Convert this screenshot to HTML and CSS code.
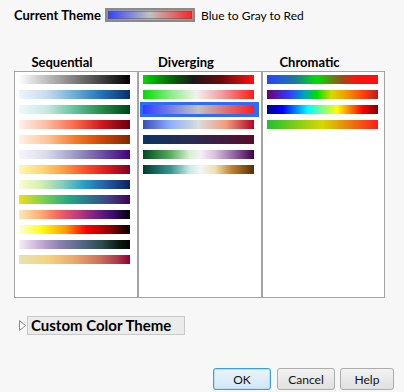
FILE: index.html
```html
<!DOCTYPE html>
<html lang="en">

<head>
    <meta charset="UTF-8">
    <meta name="viewport" content="width=device-width, initial-scale=1.0">
    <title>Color Themes</title>
    <link rel="stylesheet" href="styles.css">
</head>

<body>
    <div class="dialog">
        <div class="theme-row">
            <span class="theme-label">Current Theme</span>
            <span class="theme-swatch"></span>
            <span class="theme-name">Blue to Gray to Red</span>
        </div>

        <div class="lists">
            <div class="list-col">
                <p class="list-title">Sequential</p>
                <div class="list-box">
                    <div class="bar seq-1"></div>
                    <div class="bar seq-2"></div>
                    <div class="bar seq-3"></div>
                    <div class="bar seq-4"></div>
                    <div class="bar seq-5"></div>
                    <div class="bar seq-6"></div>
                    <div class="bar seq-7"></div>
                    <div class="bar seq-8"></div>
                    <div class="bar seq-9"></div>
                    <div class="bar seq-10"></div>
                    <div class="bar seq-11"></div>
                    <div class="bar seq-12"></div>
                    <div class="bar seq-13"></div>
                </div>
            </div>
            <div class="list-col">
                <p class="list-title">Diverging</p>
                <div class="list-box">
                    <div class="bar div-1"></div>
                    <div class="bar div-2"></div>
                    <div class="is-selected">
                        <div class="bar div-3"></div>
                    </div>
                    <div class="bar div-4"></div>
                    <div class="bar div-5"></div>
                    <div class="bar div-6"></div>
                    <div class="bar div-7"></div>
                </div>
            </div>
            <div class="list-col last">
                <p class="list-title">Chromatic</p>
                <div class="list-box">
                    <div class="bar chr-1"></div>
                    <div class="bar chr-2"></div>
                    <div class="bar chr-3"></div>
                    <div class="bar chr-4"></div>
                </div>
            </div>
        </div>

        <div class="custom-row">
            <svg class="disclosure" width="7" height="11" viewBox="0 0 7 11">
                <path d="M0.5 0.5 L6.5 5.5 L0.5 10.5 Z" fill="#fff" stroke="#8c8c8c" stroke-width="1"/>
            </svg>
            <span class="custom-title">Custom Color Theme</span>
        </div>

        <div class="buttons">
            <button class="btn btn-default">OK</button>
            <button class="btn btn-cancel">Cancel</button>
            <button class="btn btn-help">Help</button>
        </div>
    </div>
</body>

</html>
```

FILE: styles.css
```css
body {
    margin: 0;
    background-color: #f7f7f7;
    font-family: Lato, "Noto Sans", sans-serif;
    color: #000;
}

.dialog {
    width: 404px;
    height: 392px;
    padding: 8px 10px 0 14px;
    box-sizing: border-box;
    display: flex;
    flex-direction: column;
}

.theme-row {
    display: flex;
    align-items: center;
    height: 14px;
    white-space: nowrap;
}

.theme-label {
    font-size: 13px;
    font-weight: bold;
    width: 91px;
}

.theme-swatch {
    width: 90px;
    height: 14px;
    box-sizing: border-box;
    border: 2px solid #8a8a8a;
    background: linear-gradient(to right, #2f3dff, #c2c2c2 50%, #ff1e1e);
    box-shadow: inset 0 0 0 1px rgba(255, 255, 255, 0.35), inset 0 0 0 2px rgba(90, 90, 90, 0.55);
}

.theme-name {
    font-size: 12px;
    margin-left: 6px;
}

.lists {
    display: flex;
    margin-top: 31px;
}

.list-col {
    width: 124px;
}

.list-col.last {
    width: 123px;
}

.list-title {
    margin: 0;
    font-size: 13px;
    font-weight: bold;
    line-height: 18px;
    text-align: center;
    padding-right: 28px;
    white-space: nowrap;
}

.list-box {
    height: 227px;
    box-sizing: border-box;
    border: 1px solid #a3a3a3;
    background-color: #fff;
    padding: 3px 0 0 4px;
    display: flex;
    flex-direction: column;
    gap: 6px;
}

.bar {
    width: 111px;
    height: 9px;
    flex-shrink: 0;
}

.is-selected {
    margin: -3px -5px -3px -3px;
    padding: 3px 5px 3px 3px;
    background-color: #2e6cf7;
    width: 111px;
}

/* sequential */
.seq-1 { background: linear-gradient(to right, #fdfdfd, #000); }
.seq-2 { background: linear-gradient(to right, #eef5fc, #c6dbef 25%, #6baed6 50%, #2171b5 75%, #08306b); }
.seq-3 { background: linear-gradient(to right, #eef9fa, #c7eae3 25%, #62c29e 50%, #238b45 75%, #00441b); }
.seq-4 { background: linear-gradient(to right, #fff0ea, #fcbba1 25%, #fb6a4a 50%, #cb181d 75%, #67000d); }
.seq-5 { background: linear-gradient(to right, #fff1e2, #fdc79a 25%, #f47c2a 50%, #d64a05 72%, #7f2704); }
.seq-6 { background: linear-gradient(to right, #f7f5fb, #dadaeb 25%, #9e9ac8 50%, #6a51a3 75%, #3f007d); }
.seq-7 { background: linear-gradient(to right, #fff7b0, #fed976 20%, #fd9f44 40%, #fc4e2a 60%, #e31a1c 78%, #800026); }
.seq-8 { background: linear-gradient(to right, #fbfdd0, #d4eeb3 20%, #7fcdbb 40%, #2c9fc6 58%, #225ea8 78%, #0c2060); }
.seq-9 { background: linear-gradient(to right, #f1dd18, #7ad151 22%, #22a884 45%, #2a788e 62%, #414487 80%, #440154); }
.seq-10 { background: linear-gradient(to right, #fde9b2, #fdab74 20%, #f2685f 35%, #c23c7a 52%, #7a2281 68%, #3b0f70 84%, #000004); }
.seq-11 { background: linear-gradient(to right, #ffffdc, #ffff10 20%, #ff9a00 42%, #ff0000 60%, #a00000 80%, #000); }
.seq-12 { background: linear-gradient(to right, #f7eef7, #c2a9d2 20%, #8a7ead 38%, #576a8a 55%, #2b4a4c 75%, #0a1a12 90%, #020805); }
.seq-13 { background: linear-gradient(to right, #e2e3b2, #f5d580 25%, #e9a86a 50%, #d0725e 72%, #ac3d4c 88%, #930034); }

/* diverging */
.div-1 { background: linear-gradient(to right, #00d800, #056a05 25%, #1a1a1a 45%, #6a0a0a 70%, #ff1010); }
.div-2 { background: linear-gradient(to right, #00dc00, #8aec8a 25%, #f2f2f2 48%, #f2a0a8 70%, #ff1a1a); }
.div-3 { background: linear-gradient(to right, #2f3dff, #c2c2c2 50%, #ff1e1e); }
.div-4 { background: linear-gradient(to right, #3b4cc0, #8db0fe 25%, #dcdcdc 50%, #f49a7b 75%, #b40426); }
.div-5 { background: linear-gradient(to right, #0c3462, #2a2a55 45%, #5a0a2a); }
.div-6 { background: linear-gradient(to right, #004a1c, #5aae61 25%, #d9f0d3 42%, #f4f0f5 52%, #d8bfdc 65%, #9970ab 80%, #40004b); }
.div-7 { background: linear-gradient(to right, #003c30, #35978f 25%, #c7eae5 42%, #f5f5f5 52%, #f0dfb0 65%, #bf812d 80%, #543005); }

/* chromatic */
.chr-1 { background: linear-gradient(to right, #2a43ff, #1a7aa0 25%, #00e000 45%, #5a8a10 58%, #b04010 70%, #ff1010 80%, #ff1010); }
.chr-2 { background: linear-gradient(to right, #6a006e, #2f3dff 20%, #00a0c0 33%, #00e000 45%, #d8d800 58%, #f0a000 70%, #ff3810 88%, #b02020); }
.chr-3 { background: linear-gradient(to right, #000090, #0000ff 14%, #00ffff 37%, #80ff80 50%, #ffff00 63%, #ff0000 86%, #800000); }
.chr-4 { background: linear-gradient(to right, #20c030, #d8d800 50%, #ff1a1a); }

.custom-row {
    display: flex;
    align-items: center;
    height: 19px;
    margin-top: 18px;
    padding-left: 5px;
}

.disclosure {
    margin-right: 1px;
}

.custom-title {
    font-size: 15px;
    font-weight: bold;
    background-color: #ebebeb;
    border: 1px solid #c9c9c9;
    line-height: 17px;
    padding: 0 0 0 3px;
    width: 158px;
    box-sizing: border-box;
    white-space: nowrap;
}

.buttons {
    display: flex;
    justify-content: flex-end;
    gap: 5px;
    margin-top: 33px;
}

.btn {
    height: 22px;
    font-family: Lato, "Noto Sans", sans-serif;
    font-size: 12px;
    color: #111;
    border: 1px solid #acacac;
    border-radius: 3px;
    background: linear-gradient(#f2f2f2, #e0e0e0);
    padding: 0;
    cursor: pointer;
}

.btn-default {
    width: 58px;
    border-color: #3c9ce8;
    background: linear-gradient(#e9f4fc, #d2e8f8);
    box-shadow: inset 0 0 0 1px #b9def8;
    margin-right: 1px;
}

.btn-cancel {
    width: 58px;
}

.btn-help {
    width: 54px;
}
```
